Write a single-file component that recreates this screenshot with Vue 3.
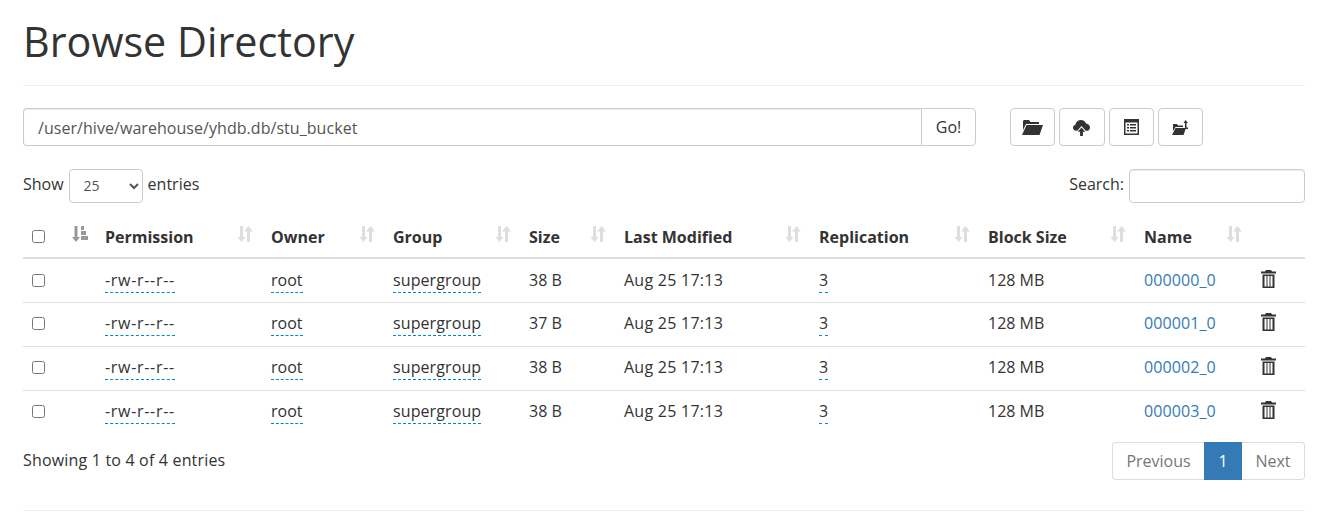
<script setup>
const columns = [
  { label: "Permission" },
  { label: "Owner" },
  { label: "Group" },
  { label: "Size" },
  { label: "Last Modified" },
  { label: "Replication" },
  { label: "Block Size" },
  { label: "Name" },
];

const files = [
  { perm: "-rw-r--r--", size: "38 B", name: "000000_0" },
  { perm: "-rw-r--r--", size: "37 B", name: "000001_0" },
  { perm: "-rw-r--r--", size: "38 B", name: "000002_0" },
  { perm: "-rw-r--r--", size: "38 B", name: "000003_0" },
];
</script>

<template>
  <div class="page">
    <div class="page-header">
      <h1>Browse Directory</h1>
    </div>

    <div class="toolbar">
      <div class="path-group">
        <input class="path-input" type="text" value="/user/hive/warehouse/yhdb.db/stu_bucket" />
        <button class="btn go">Go!</button>
      </div>
      <div class="actions">
        <button class="btn icon">
          <svg width="21" height="15" viewBox="0 0 21 15"><path d="M2 0h5l1.500 2H17v2H4L1 10V1z M4.500 5H21l-3.500 10H0z" fill="#333" /></svg>
        </button>
        <button class="btn icon">
          <svg width="17" height="17" viewBox="0 0 18 18"><path d="M4.500 12.500H3.500C1.500 12.500 0 11 0 9.300 0 7.700 1 6.500 2.500 6.100 3 3 5.500 1 8.500 1c2.500 0 4.500 1.500 5.300 3.700 2.300.2 4.200 2 4.200 4.200 0 2-1.600 3.600-3.500 3.600h-1L9 7.500z" fill="#333" /><path d="M9 9l4 4.500h-2.500V18h-3v-4.500H5z" fill="#333" /></svg>
        </button>
        <button class="btn icon">
          <svg width="15" height="16" viewBox="0 0 15 16"><path fill-rule="evenodd" d="M0 0h15v16H0z M1.500 3.500v11h12v-11z" fill="#333" /><path d="M3 5h2v1.500H3z M6 5h6v1.500H6z M3 8h2v1.500H3z M6 8h6v1.500H6z M3 11h2v1.500H3z M6 11h6v1.500H6z" fill="#333" /></svg>
        </button>
        <button class="btn icon">
          <svg width="17" height="15" viewBox="0 0 17 15"><path d="M1 4h4l1 1.500h5V7H3.500L1 11V5z M3.500 8H14l-2.500 7H0z" fill="#333" /><path d="M13.500 0l2.500 3h-1.500v4.500H16V9h-3V3h-1.500z" fill="#333" /></svg>
        </button>
      </div>
    </div>

    <div class="controls">
      <label class="length">
        Show
        <select class="length-select">
          <option>25</option>
          <option>50</option>
          <option>100</option>
        </select>
        entries
      </label>
      <label class="search">
        Search:
        <input class="search-input" type="search" />
      </label>
    </div>

    <table class="files">
      <colgroup>
        <col style="width: 41px" />
        <col style="width: 33px" />
        <col style="width: 166px" />
        <col style="width: 122px" />
        <col style="width: 136px" />
        <col style="width: 95px" />
        <col style="width: 195px" />
        <col style="width: 169px" />
        <col style="width: 156px" />
        <col style="width: 116px" />
        <col />
      </colgroup>
      <thead>
        <tr>
          <th><input class="check" type="checkbox" /></th>
          <th>
            <svg class="sort-first" width="16" height="16" viewBox="0 0 16 16"><path d="M2.500 0h3v11H8l-4 5-4-5h2.500z" fill="#999" /><path d="M9 0h3v4H9z M9 5h5v4H9z M9 10h7v4H9z" fill="#999" /></svg>
          </th>
          <th v-for="col in columns" :key="col.label">
            {{ col.label }}
            <svg class="sort" width="16" height="16" viewBox="0 0 16 16"><path d="M3 0h3v11h2.500l-4 5-4-5H3z M10 5h3v11h-3z" fill="#dedede" /><path d="M11.500 0l4.500 5.500H7z" fill="#dedede" /></svg>
          </th>
          <th></th>
        </tr>
      </thead>
      <tbody>
        <tr v-for="file in files" :key="file.name">
          <td><input class="check" type="checkbox" /></td>
          <td></td>
          <td><span class="editable perm">{{ file.perm }}</span></td>
          <td><span class="editable">root</span></td>
          <td><span class="editable wide">supergroup</span></td>
          <td>{{ file.size }}</td>
          <td class="date">Aug 25 17:13</td>
          <td><span class="editable">3</span></td>
          <td>128 MB</td>
          <td><a class="file-link wide" href="#">{{ file.name }}</a></td>
          <td>
            <svg class="trash" width="15" height="18" viewBox="0 0 15 18">
              <path d="M5 0h5l1 1.500h4v2H0v-2h4z" fill="#333" />
              <path fill-rule="evenodd" d="M1.500 4.500h12V18h-12z M3.500 6v10.500h2V6z M6.500 6v10.500h2V6z M9.500 6v10.500h2V6z" fill="#333" />
            </svg>
          </td>
        </tr>
      </tbody>
    </table>

    <div class="footer">
      <div class="info">Showing 1 to 4 of 4 entries</div>
      <div class="pagination">
        <a class="page-item first">Previous</a>
        <a class="page-item active">1</a>
        <a class="page-item last">Next</a>
      </div>
    </div>

    <hr class="rule" />
  </div>
</template>

<style>
html,
body {
  margin: 0;
  background: #fff;
}
</style>

<style scoped>
.page {
  padding: 0 14px 0 23px;
  font-family: "Open Sans", "Noto Sans", sans-serif;
  font-size: 16px;
  color: #333;
  box-sizing: border-box;
}
.page-header {
  height: 85px;
  border-bottom: 1px solid #eee;
  box-sizing: content-box;
}
h1 {
  margin: 0;
  padding-top: 13px;
  font-size: 41.3px;
  line-height: 56px;
  font-weight: 400;
}
.toolbar {
  display: flex;
  margin-top: 22px;
  height: 38px;
}
.path-group {
  display: flex;
  width: 953px;
}
.path-input {
  flex: 1;
  min-width: 0;
  box-sizing: border-box;
  height: 38px;
  padding: 2px 14px 0;
  border: 1px solid #ccc;
  border-right: 0;
  border-radius: 4px 0 0 4px;
  font: inherit;
  letter-spacing: 0.05px;
  color: #555;
  box-shadow: inset 0 1px 1px rgba(0, 0, 0, 0.075);
}
.btn {
  box-sizing: border-box;
  height: 38px;
  background: #fff;
  border: 1px solid #ccc;
  border-radius: 4px;
  font: inherit;
  color: #333;
  padding: 0;
  display: flex;
  align-items: center;
  justify-content: center;
}
.go {
  width: 55px;
  border-radius: 0 4px 4px 0;
}
.actions {
  display: flex;
  gap: 4px;
  margin-left: 34px;
}
.icon {
  width: 45.33px;
}
.controls {
  display: flex;
  justify-content: space-between;
  align-items: center;
  margin-top: 23px;
  height: 34px;
}
.length,
.search {
  display: flex;
  align-items: flex-start;
  gap: 5px;
  line-height: 30px;
  height: 34px;
}
.length-select {
  box-sizing: border-box;
  width: 74px;
  height: 34px;
  padding: 0 10px 2px;
  border: 1px solid #ccc;
  border-radius: 4px;
  background: #fff;
  color: #555;
  font-family: inherit;
  font-size: 14px;
}
.search-input {
  box-sizing: border-box;
  width: 176px;
  height: 34px;
  border: 1px solid #ccc;
  border-radius: 4px;
  background: #fff;
  padding: 0 8px;
  box-shadow: inset 0 1px 1px rgba(0, 0, 0, 0.075);
}
.files {
  table-layout: fixed;
  width: 1282px;
  margin-top: 13px;
  border-collapse: collapse;
}
.files th {
  position: relative;
  height: 42px;
  padding: 0 8px;
  text-align: left;
  font-weight: 700;
  border-bottom: 2px solid #ddd;
  line-height: 22px;
  box-sizing: border-box;
}
.files td {
  height: 44px;
  padding: 0 8px 2px;
  border-top: 1px solid #ddd;
  box-sizing: border-box;
}
.files tbody tr:first-child td {
  padding-bottom: 0;
  border-top: 0;
}
.check {
  display: block;
  width: 13px;
  height: 13px;
  margin: 0 0 0 1px;
}
.sort,
.sort-first {
  position: absolute;
  top: 10px;
  right: 10px;
}
.sort-first {
  right: auto;
  left: 8px;
}
.editable {
  border-bottom: 1px dashed #08c;
  padding-bottom: 1px;
}
.perm {
  letter-spacing: 0.7px;
}
.wide {
  letter-spacing: 0.1px;
}
.date {
  letter-spacing: 0.25px;
}
.file-link {
  color: #337ab7;
  text-decoration: none;
}
.trash {
  display: block;
  margin: -3px 0 0 1px;
}
.footer {
  display: flex;
  justify-content: space-between;
  align-items: center;
  margin-top: 8px;
  height: 38px;
}
.info {
  letter-spacing: 0.18px;
  padding-bottom: 2px;
}
.pagination {
  display: flex;
}
.page-item {
  box-sizing: border-box;
  height: 38px;
  display: flex;
  align-items: center;
  justify-content: center;
  border: 1px solid #ddd;
  color: #777;
  background: #fff;
}
.first {
  width: 92px;
  border-right: 0;
  border-radius: 4px 0 0 4px;
}
.active {
  width: 38px;
  background: #337ab7;
  border-color: #337ab7;
  color: #fff;
  font-weight: 400;
}
.last {
  width: 63px;
  border-left: 0;
  border-radius: 0 4px 4px 0;
}
.rule {
  margin: 30px 0 0;
  border: 0;
  border-top: 1px solid #eee;
}
</style>
